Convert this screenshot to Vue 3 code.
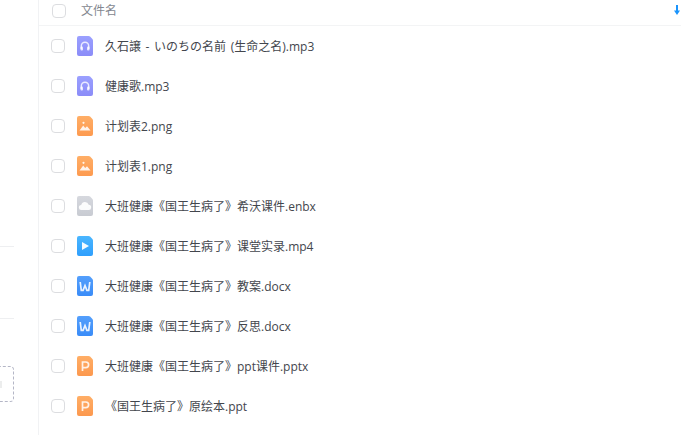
<script setup>
const files = [
  { name: '久石譲 - いのちの名前 (生命之名).mp3', type: 'audio' },
  { name: '健康歌.mp3', type: 'audio' },
  { name: '计划表2.png', type: 'image' },
  { name: '计划表1.png', type: 'image' },
  { name: '大班健康《国王生病了》希沃课件.enbx', type: 'cloud' },
  { name: '大班健康《国王生病了》课堂实录.mp4', type: 'video' },
  { name: '大班健康《国王生病了》教案.docx', type: 'word' },
  { name: '大班健康《国王生病了》反思.docx', type: 'word' },
  { name: '大班健康《国王生病了》ppt课件.pptx', type: 'ppt' },
  { name: '《国王生病了》原绘本.ppt', type: 'ppt' },
]
const colors = {
  audio: ['#9ba0ff', '#8b8cf8'],
  image: ['#ffae66', '#fd9a50'],
  cloud: ['#d6d8de', '#c8cbd2'],
  video: ['#4ab6ff', '#2f9ffd'],
  word: ['#549ffc', '#3a8cf8'],
  ppt: ['#ffae66', '#fc984e'],
}
</script>

<template>
  <div class="page">
    <aside class="side">
      <div class="rule first"></div>
      <div class="rule second"></div>
      <div class="dashed"><span class="mark"></span></div>
    </aside>
    <main class="list">
      <header class="head">
        <span class="check"></span>
        <span class="head-title">文件名</span>
        <svg class="sort" width="6" height="10" viewBox="0 0 6 10">
          <path d="M2 0h2v5.500h2L3 10 0 5.500h2z" fill="#1a94fc" />
        </svg>
      </header>
      <div v-for="f in files" :key="f.name" class="row">
        <span class="check"></span>
        <svg class="icon" width="16" height="20" viewBox="0 0 16 20">
          <defs>
            <linearGradient :id="'g-' + f.type" x1="0" y1="0" x2="0" y2="1">
              <stop offset="0" :stop-color="colors[f.type][0]" />
              <stop offset="1" :stop-color="colors[f.type][1]" />
            </linearGradient>
          </defs>
          <path
            d="M2 0h9.500q1 0 1.600.6l2.300 2.400q.6.600.6 1.600V18a2 2 0 0 1-2 2H2a2 2 0 0 1-2-2V2a2 2 0 0 1 2-2z"
            :fill="'url(#g-' + f.type + ')'"
          />
          <template v-if="f.type === 'audio'">
            <path d="M4.300 13V10a3.700 3.700 0 0 1 7.400 0V13" fill="none" stroke="#fff" stroke-opacity=".8" stroke-width="1.500" />
            <rect x="3.500" y="10.500" width="2.500" height="4" rx="1" fill="#fff" fill-opacity=".8" />
            <rect x="10" y="10.500" width="2.500" height="4" rx="1" fill="#fff" fill-opacity=".8" />
          </template>
          <template v-else-if="f.type === 'image'">
            <path d="M2.500 14.500l3.700-5 2 2.500 1.800-1.700 3.500 4.200z" fill="#fff" fill-opacity=".88" />
            <circle cx="6.500" cy="6.800" r="1.100" fill="#fff" fill-opacity=".88" />
          </template>
          <template v-else-if="f.type === 'cloud'">
            <path d="M4.500 14a2.500 2.500 0 0 1-.3-5 3.900 3.900 0 0 1 7.500-.2 2.600 2.600 0 0 1-.2 5.200z" fill="#fff" fill-opacity=".92" />
          </template>
          <template v-else-if="f.type === 'video'">
            <path d="M5 6l7 4-7 4z" fill="#fff" fill-opacity=".95" />
          </template>
          <template v-else-if="f.type === 'word'">
            <path d="M3.200 6l1.100 8.300h1.800L8 9.500l1.900 4.800h1.800l1.100-8.300" fill="none" stroke="#fff" stroke-opacity=".88" stroke-width="1.700" />
          </template>
          <template v-else>
            <path d="M5.500 15V6h3.300a2.800 2.800 0 0 1 0 5.600H5.500" fill="none" stroke="#fff" stroke-opacity=".85" stroke-width="1.700" />
          </template>
        </svg>
        <span class="name">{{ f.name }}</span>
      </div>
    </main>
  </div>
</template>

<style>
html, body { margin: 0; background: #fff; overflow: hidden; }
</style>

<style scoped>
.page {
  display: flex;
  width: 681px;
  height: 435px;
  overflow: hidden;
  background: #fff;
  font-family: "Open Sans", "Noto Sans CJK SC", sans-serif;
}
.side {
  flex: none;
  width: 38px;
  border-right: 1px solid #f1f2f4;
  display: flex;
  flex-direction: column;
  overflow: hidden;
}
.rule { width: 14px; height: 1px; background: #eeeff1; }
.first { margin-top: 246px; }
.second { margin-top: 71px; }
.dashed {
  box-sizing: border-box;
  width: 40px;
  height: 36px;
  margin: 47px 0 0 -26px;
  border: 1px dashed #b4b6c6;
  border-radius: 4px;
  flex: none;
  display: flex;
  align-items: center;
  justify-content: flex-end;
  padding-right: 11px;
}
.mark { width: 2px; height: 7px; background: #eceded; }
.list { flex: 1; min-width: 0; }
.head {
  box-sizing: border-box;
  height: 26px;
  display: flex;
  align-items: center;
  padding: 0 1px 3px 13px;
  border-bottom: 1px solid #f3f4f5;
}
.head-title {
  margin-left: 15px;
  font-size: 12px;
  line-height: 20px;
  color: #83878f;
}
.sort { margin: 0 0 2px auto; }
.row {
  height: 40px;
  display: flex;
  align-items: center;
  padding-left: 12px;
}
.check {
  flex: none;
  box-sizing: border-box;
  width: 14px;
  height: 14px;
  border: 1px solid #dcdde0;
  border-radius: 4px;
  background: #fff;
}
.icon { flex: none; margin-left: 12px; }
.name {
  margin: 1px 0 0 12px;
  font-size: 12px;
  line-height: 20px;
  color: #43464d;
  white-space: nowrap;
  word-spacing: 1.5px;
}
</style>
